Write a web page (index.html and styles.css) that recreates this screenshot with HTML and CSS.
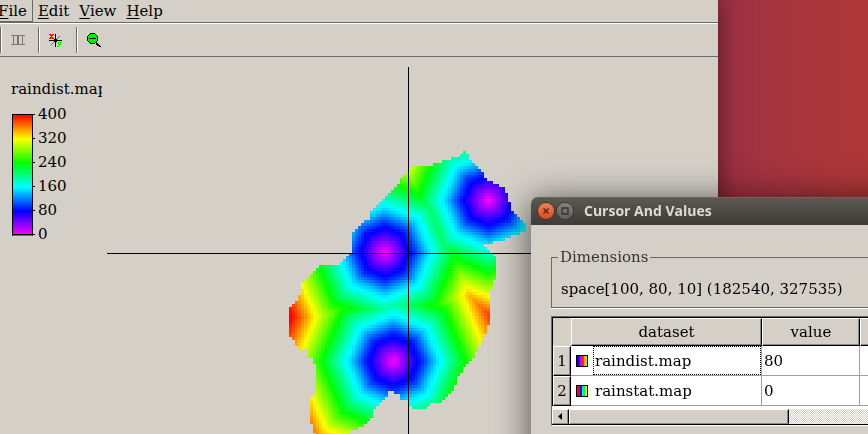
FILE: index.html
```html
<!DOCTYPE html>
<html lang="en">
<head>
<meta charset="utf-8">
<title>Cursor And Values</title>
<link rel="stylesheet" href="styles.css">
</head>
<body>
<div class="desktop">
  <main class="window">
    <nav class="menubar">
      <button class="menu menu-active"><u>F</u>ile</button>
      <button class="menu"><u>E</u>dit</button>
      <button class="menu"><u>V</u>iew</button>
      <button class="menu"><u>H</u>elp</button>
    </nav>
    <div class="toolbar">
      <button class="tool" aria-label="Animate" disabled>
        <svg width="16" height="16" viewBox="0 0 16 16" shape-rendering="crispEdges" fill="#777570"><path d="M1 3h14v1H1zM1 12h14v1H1zM3 4h1v8H3zM7 4h1v8H7zM8 4h1v8H8zM12 4h1v8h-1z"/></svg>
      </button>
      <button class="tool" aria-label="Cursor and values">
        <svg width="16" height="16" viewBox="0 0 16 16" shape-rendering="crispEdges"><path fill="#777570" d="M3 12h1v1H3zM4 11h1v1H4zM5 10h1v1H5zM9 6h1v1H9zM10 5h1v1h-1zM11 4h1v1h-1zM9 10h1v1H9zM5 6h1v1H5z"/><path fill="#000" d="M7 2h1v13H7zM1 8h13v1H1zM6 7h3v3H6z"/><path fill="red" d="M1 2h2v1H1zM4 2h2v1H4zM2 3h3v1H2zM3 4h1v1H3zM2 5h3v1H2zM1 6h2v1H1zM4 6h2v1H4z"/><path fill="#0f0" d="M9 10h2v1H9zM12 10h2v1h-2zM10 11h1v1h-1zM12 11h1v1h-1zM10 12h3v1h-3zM11 13h1v1h-1zM9 14h2v1H9z"/></svg>
      </button>
      <button class="tool" aria-label="Zoom out">
        <svg width="16" height="16" viewBox="0 0 16 16" shape-rendering="crispEdges"><path fill="#0e0" d="M4 2h5v1h1v1h1v5h-1v1H9v1H4v-1H3V9H2V4h1V3h1z"/><path fill="#000" d="M4 1h5v1H4zM3 2h1v1H3zM9 2h1v1H9zM2 3h1v1H2zM10 3h1v1h-1zM1 4h1v5H1zM11 4h1v5h-1zM2 9h1v1H2zM3 10h1v1H3zM4 11h5v1H4zM9 10h2v1H9zM10 9h1v1h-1zM3 6h7v1H3zM10 11h2v1h-2zM10 12h3v1h-3zM11 13h3v1h-3zM13 14h2v1h-2z"/></svg>
      </button>
    </div>
    <div class="content">
      <aside class="key">
        <h2 class="key-title">raindist.map</h2>
        <div class="key-scale">
          <div class="key-bar"></div>
          <ul class="key-labels"><li>400</li><li>320</li><li>240</li><li>160</li><li>80</li><li>0</li></ul>
        </div>
      </aside>
      <section class="view" aria-label="Map view">
        <canvas class="map" id="map" width="80" height="95"></canvas>
        <span class="cross-h"></span>
        <span class="cross-v"></span>
      </section>
    </div>
  </main>

  <section class="dialog" aria-label="Cursor And Values">
    <header class="titlebar">
      <button class="win-btn win-close" aria-label="Close"><svg width="16" height="16" viewBox="0 0 16 16"><path d="M5.500 5.500l5 5M10.500 5.500l-5 5" stroke="#57281a" stroke-width="1.500"/></svg></button>
      <button class="win-btn win-max" aria-label="Maximize"><svg width="16" height="16" viewBox="0 0 16 16"><path d="M5 5h6v6H5z" fill="none" stroke="#33322d" stroke-width="1.300"/></svg></button>
      <h1 class="title">Cursor And Values</h1>
    </header>
    <div class="dialog-body">
      <fieldset class="group">
        <legend>Dimensions</legend>
        <p class="dims">space[100, 80, 10] (182540, 327535)</p>
      </fieldset>
      <div class="grid-frame">
        <table class="grid">
          <colgroup><col class="col-num"><col class="col-name"><col class="col-value"><col></colgroup>
          <thead><tr><td></td><th>dataset</th><th>value</th><th></th></tr></thead>
          <tbody>
            <tr><th>1</th><td class="name"><div class="item"><i class="swatch swatch-ramp"></i><span class="label focus">raindist.map</span></div></td><td>80</td><td></td></tr>
            <tr><th>2</th><td class="name"><div class="item"><i class="swatch swatch-bands"></i><span class="label">rainstat.map</span></div></td><td>0</td><td></td></tr>
          </tbody>
        </table>
        <div class="scrollbar">
          <button class="scroll-btn" aria-label="Scroll left"><svg width="5" height="7" viewBox="0 0 5 7"><path d="M4 0v7L0 3.500z"/></svg></button>
          <div class="thumb"></div>
        </div>
      </div>
    </div>
  </section>
</div>
<script src="map.js"></script>
</body>
</html>
```
FILE: map.js
```js
// Distance-to-nearest-station raster, clipped to the study area.
const STATIONS = [[66, 16], [31.4, 33.2], [34.3, 69.6]];
const CELL_VALUE = 10;

// Study area boundary, in raster cells.
const AREA = [
  [58,0],[59,0],[59,1],[60,1],[60,3],[61,3],[61,4],[62,4],[62,5],[63,5],[63,6],[64,6],[64,7],[65,7],[65,9],
  [66,9],[66,10],[68,10],[68,11],[69,11],[70,12],[71,12],[72,13],[73,15],[73,17],[74,17],[74,20],[75,20],
  [75,21],[76,21],[76,22],[77,22],[77,23],[78,23],[78,24],[79,24],[79,27],[77,27],[77,28],[74,28],[74,29],
  [72,29],[72,30],[68,30],[68,31],[64,31],[65,32],[66,33],[67,34],[68,35],[69,35],[69,42],[68,43],[68,46],
  [67,46],[67,58],[66,58],[66,61],[65,61],[65,63],[64,63],[64,65],[63,65],[62,68],[61,69],[60,71],[58,72],
  [58,74],[56,75],[56,77],[55,79],[54,80],[53,81],[52,82],[50,84],[47,84],[46,86],[42,86],[40,84],[40,83],
  [38,83],[37,82],[37,81],[35,81],[35,80],[33,80],[33,82],[32,82],[31,84],[30,84],[29,86],[28,86],[28,88],
  [27,89],[26,90],[25,92],[23,92],[23,93],[20,93],[20,95],[9,95],[8,93],[8,91],[7,91],[7,82],[8,82],[8,81],
  [9,81],[9,71],[8,71],[8,69],[7,69],[6,68],[6,66],[4,66],[3,65],[2,64],[1,63],[1,62],[0,62],[0,52],[1,52],
  [1,51],[2,51],[2,50],[3,50],[3,48],[4,48],[4,44],[5,44],[5,43],[6,42],[7,41],[8,40],[9,39],[10,38],
  [17,38],[17,37],[18,37],[18,36],[19,35],[20,34],[21,34],[21,27],[22,27],[22,26],[23,25],[25,24],[25,23],
  [26,23],[27,22],[27,20],[28,19],[29,18],[30,17],[31,16],[32,15],[34,14],[34,13],[36,12],[36,11],[37,11],
  [37,9],[38,9],[38,8],[39,8],[39,7],[41,6],[41,5],[48,5],[48,4],[51,4],[51,3],[54,3],[54,2],[57,2],
  [57,1],[58,1]
];

const canvas = document.getElementById('map');
const ctx = canvas.getContext('2d');
const area = new Path2D();
AREA.forEach(([x, y], i) => i ? area.lineTo(x, y) : area.moveTo(x, y));
area.closePath();

// Spreading over eight neighbours gives octagonal distance rings.
function spread(dx, dy) {
  const a = Math.abs(dx), b = Math.abs(dy);
  return Math.max(a, b) + (Math.SQRT2 - 1) * Math.min(a, b);
}

// Magenta, blue, cyan, green, yellow, red; eased between blue and cyan.
function hue(value) {
  const t = (value - 80) / 80;
  if (t <= 0 || t >= 1) return 300 - value * 0.75;
  return 240 - 60 * (t + t * t * (3 - 2 * t)) / 2;
}

for (let y = 0; y < canvas.height; y++) {
  for (let x = 0; x < canvas.width; x++) {
    if (!ctx.isPointInPath(area, x + 0.45, y + 0.45)) continue;
    const d = Math.min(...STATIONS.map(([sx, sy]) => spread(x - sx, y - sy)));
    const value = Math.min(400, d * CELL_VALUE);
    ctx.fillStyle = `hsl(${hue(value)} 100% 50%)`;
    ctx.fillRect(x, y, 1, 1);
  }
}
```
FILE: styles.css
```css
:root {
  --face: #d4d0c8;
  --dark: #6b6965;
}

* { box-sizing: border-box; }

body {
  margin: 0;
  font: 15px/20px "DejaVu Serif", serif;
  color: #000;
}

h1, h2, p, ul { margin: 0; padding: 0; font-weight: normal; }

button {
  padding: 0;
  border: 0;
  background: none;
  font: inherit;
  color: inherit;
}

svg { display: block; }

.desktop {
  position: relative;
  height: 100vh;
  overflow: hidden;
  background: linear-gradient(90deg, #9c3044 82%, #a5343e 90%, #ae3737 100%);
}

.window {
  display: flex;
  flex-direction: column;
  height: 100%;
  margin-right: 150px;
  background: var(--face);
  box-shadow: 0 0 24px rgba(0, 0, 0, .5);
}

.menubar {
  display: flex;
  height: 24px;
  border-bottom: 1px solid #fff;
  box-shadow: inset 0 -1px var(--dark);
}

.menu { height: 22px; padding: 0 5px; }
.menu u { text-underline-offset: 2px; }

.menu-active {
  margin-left: -7px;
  border-right: 1px solid var(--dark);
  border-bottom: 1px solid var(--dark);
}

.toolbar {
  display: flex;
  height: 33px;
  padding: 3px 0;
  border-bottom: 1px solid var(--dark);
}

.tool {
  display: flex;
  align-items: center;
  justify-content: center;
  width: 38px;
  padding: 0 3px 1px 0;
  border-left: 1px solid var(--dark);
  box-shadow: inset 1px 0 #fff;
}

.content { display: flex; flex: 1; min-height: 0; }

.key { width: 107px; padding: 22px 5px 0 11px; }

.key-title { overflow: hidden; font-size: 15px; white-space: nowrap; }

.key-scale { display: flex; padding: 3px 0 0 1px; }

.key-bar {
  width: 21px;
  height: 122px;
  margin-top: 12px;
  border: 1px solid #000;
  border-bottom-color: #f0f;
  background: linear-gradient(#f00, #ff0 20%, #0f0 40%, #0ff 60%, #00f 80%, #f0f);
  box-shadow: inset 0 -1px #000;
}

.key-labels { list-style: none; line-height: 24px; }

.key-labels li { display: flex; align-items: center; gap: 3px; }

.key-labels li::before { content: ""; width: 2px; height: 1px; background: #000; }

.view { position: relative; flex: 1; overflow: hidden; }

.map {
  position: absolute;
  left: 182px;
  top: 94px;
  width: 240px;
  height: 285px;
  image-rendering: pixelated;
}

.cross-h, .cross-v { position: absolute; background: #000; }
.cross-h { left: 0; right: 0; top: 196px; height: 1px; }
.cross-v { left: 301px; top: 10px; bottom: 0; width: 1px; }

.dialog {
  position: absolute;
  left: 531px;
  top: 197px;
  width: 440px;
  height: 300px;
  border-radius: 7px 7px 0 0;
  background: var(--face);
  box-shadow: 0 4px 36px rgba(0, 0, 0, .65);
}

.titlebar {
  display: flex;
  align-items: center;
  gap: 3px;
  height: 28px;
  padding: 0 7px;
  border-radius: 7px 7px 0 0;
  background: linear-gradient(#5c5a50, #3d3c37);
  box-shadow: inset 0 1px #69675c;
}

.win-btn { width: 16px; height: 16px; border-radius: 50%; }
.win-close { background: linear-gradient(#f58058, #dd4a1c); box-shadow: 0 0 0 1px #3b342e; }
.win-max { background: linear-gradient(#85837a, #626058); box-shadow: 0 0 0 1px #3b3a35; }

.title {
  padding-left: 8px;
  font: bold 14px/20px "Open Sans", sans-serif;
  color: #dfdbd2;
}

.dialog-body { padding: 22px 20px; }

.group {
  min-width: 0;
  margin: 0;
  padding: 12px 9px 8px;
  border: 1px solid var(--dark);
  box-shadow: 0 1px #fff;
}

.group legend { padding: 0 2px; margin-left: -3px; color: #333; }

.dims { white-space: nowrap; }

.grid-frame {
  margin-top: 8px;
  border: 1px solid var(--dark);
  border-right-color: #fff;
  border-bottom-color: #fff;
  background: #fff;
}

.grid {
  width: 100%;
  border-top: 1px solid #000;
  border-left: 1px solid #000;
  border-collapse: separate;
  border-spacing: 0;
  table-layout: fixed;
}

.col-num { width: 18px; }
.col-name { width: 191px; }
.col-value { width: 98px; }

.grid th, .grid td { height: 30px; padding: 0; font-weight: normal; }

.grid th {
  border: 1px solid #fff;
  border-right-color: #000;
  border-bottom-color: #000;
  background: var(--face);
  box-shadow: inset -1px -1px #8c8a84;
  text-align: center;
}

.grid thead th, .grid thead td { height: 28px; }

.grid thead td { background: var(--face); }

.grid tbody td {
  padding-left: 2px;
  border-right: 1px solid #a0a0a4;
  border-bottom: 1px solid #a0a0a4;
  background: #fff;
}

.grid tbody .name { padding-left: 5px; }

.item { display: flex; align-items: center; gap: 5px; height: 29px; }

.swatch { width: 12px; height: 12px; border: 1px solid #000; }
.swatch-ramp { background: linear-gradient(90deg, #00f 15%, #f0f 40%, #f00 60%, #fa0 75%, #8f0); }
.swatch-bands { background: linear-gradient(90deg, #f00 30%, #00f 30% 50%, #0ff 50% 65%, #0f0 65% 85%, #ff0 85%); }

.label { display: flex; flex: 1; align-items: center; height: 29px; border: 1px dotted transparent; padding-left: 1px; }
.focus { border-color: #000; }

.scrollbar {
  display: flex;
  height: 16px;
  margin-top: 3px;
  border-bottom: 1px solid #000;
  background: repeating-conic-gradient(#fff 0 25%, var(--face) 0 50%) 0 0 / 2px 2px;
}

.scroll-btn, .thumb {
  border: 1px solid #fff;
  border-right-color: #000;
  border-bottom-color: #8c8a84;
  background: var(--face);
  box-shadow: inset -1px 0 #8c8a84;
}

.scroll-btn { display: flex; align-items: center; justify-content: center; width: 17px; }
.thumb { width: 220px; }
```
